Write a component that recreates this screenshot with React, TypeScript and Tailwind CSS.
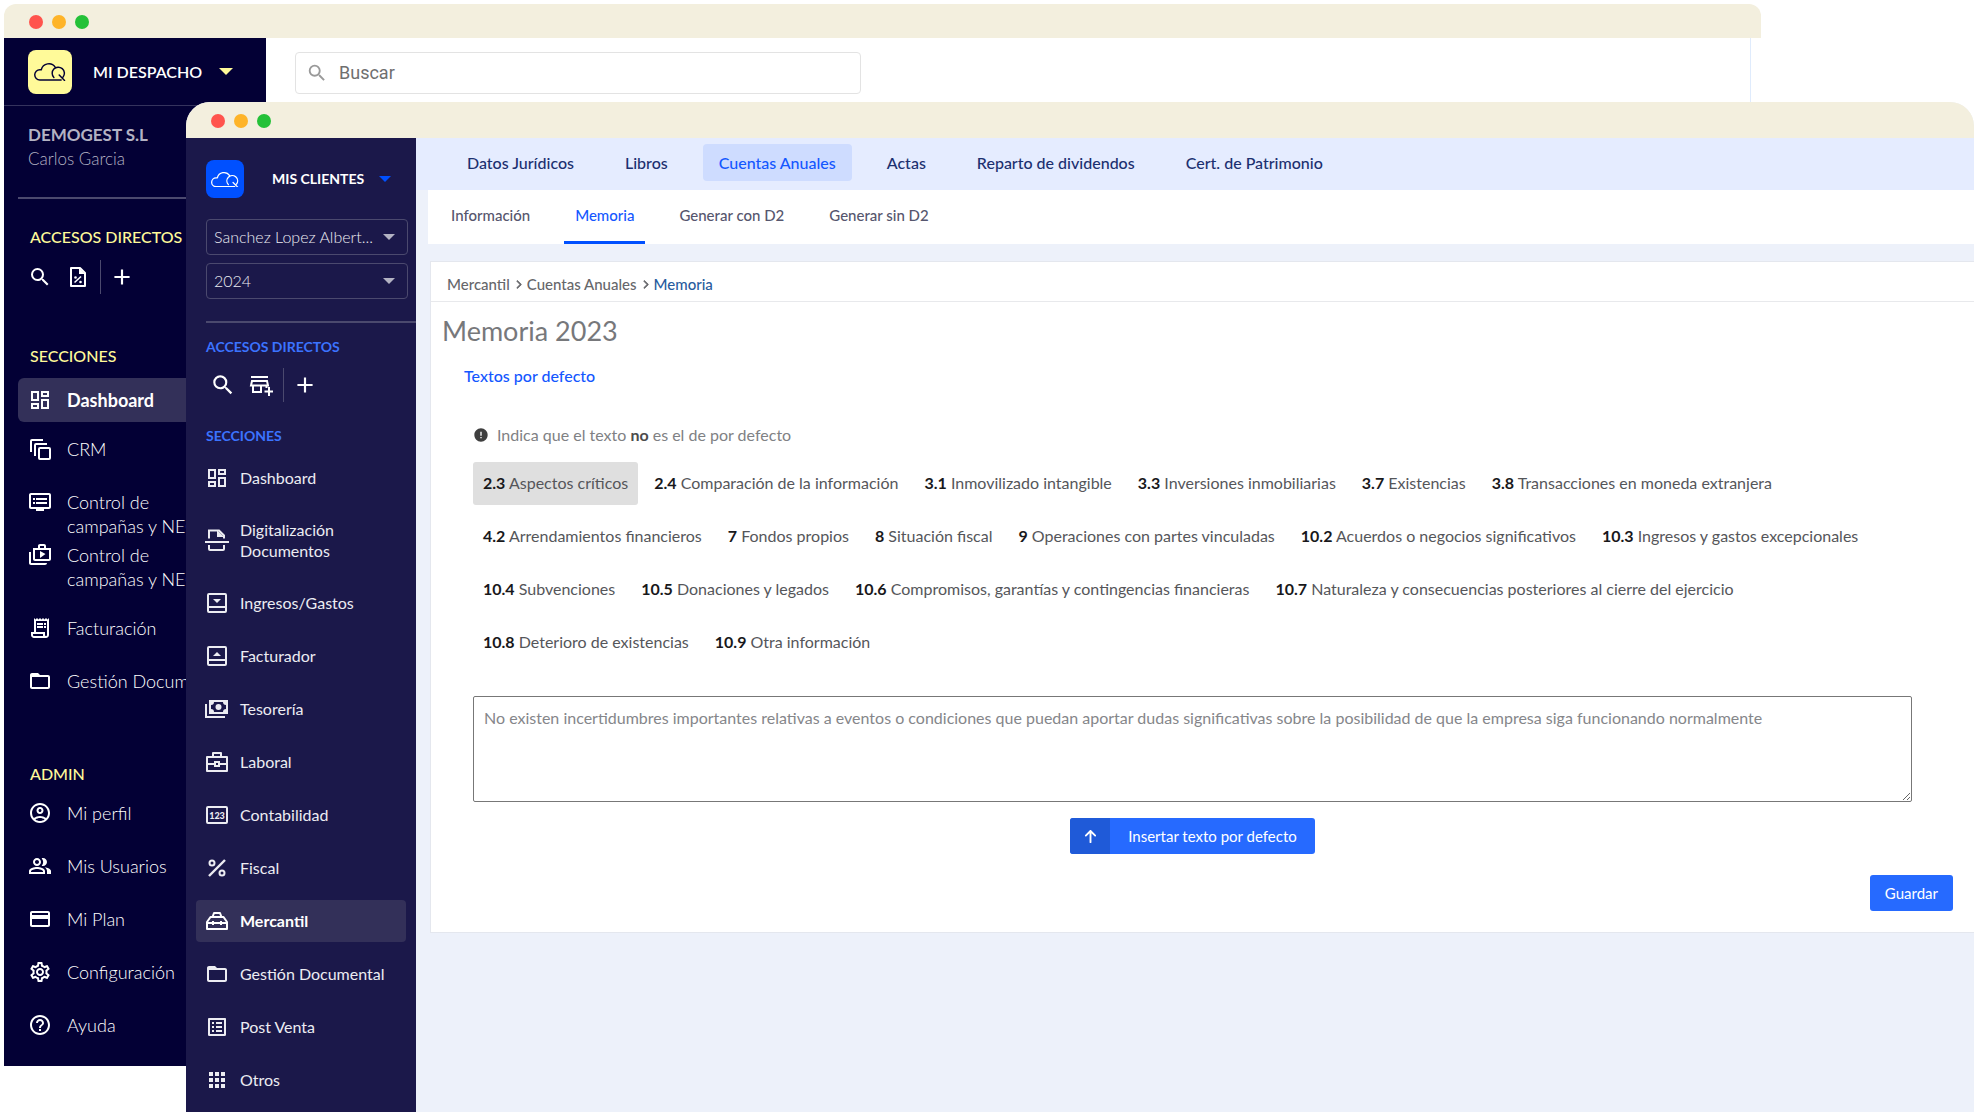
import type { ReactNode } from 'react';
import {
  MdAdd,
  MdApps,
  MdError,
  MdFolderOpen,
  MdHelpOutline,
  MdOutlineAccountCircle,
  MdOutlineCreditCard,
  MdOutlineDashboard,
  MdOutlineDvr,
  MdOutlineListAlt,
  MdOutlinePeopleAlt,
  MdOutlineReceiptLong,
  MdOutlineSettings,
  MdOutlineShopTwo,
  MdSearch,
} from 'react-icons/md';
import { FaArrowUp, FaChevronRight } from 'react-icons/fa6';

interface SvgIconProps {
  children: ReactNode;
}

function SvgIcon({ children }: SvgIconProps) {
  return (
    <svg
      viewBox="0 0 24 24"
      className="size-6"
      fill="none"
      stroke="currentColor"
      strokeWidth="2"
      aria-hidden="true"
    >
      {children}
    </svg>
  );
}

const CloudLogo = ({ className }: { className: string }) => (
  <svg
    viewBox="0 0 33 20"
    className={className}
    fill="none"
    stroke="currentColor"
    strokeWidth="1.5"
    strokeLinecap="round"
    strokeLinejoin="round"
    aria-hidden="true"
  >
    <path d="M28 18.500H6a5.200 5.200 0 0 1 0-10.500h1.500a8 8 0 0 1 14.500-2.500" />
    <path d="M20.500 16a6.300 6.300 0 1 1 9.500-.5M26 13.500l5.500 5.500" />
  </svg>
);

const Caret = ({ className }: { className: string }) => (
  <svg viewBox="0 0 14 7" className={className} fill="currentColor" aria-hidden="true">
    <path d="M0 0h14L7 7z" />
  </svg>
);

const FilePercentIcon = () => (
  <SvgIcon>
    <path d="M5 3h9l5 5v13H5z" strokeLinejoin="round" />
    <path d="M13 3v6h6z" fill="currentColor" stroke="none" />
    <path d="M8.500 17.500l6.500-6" strokeWidth="1.600" />
    <circle cx="9.500" cy="12.500" r="1.300" fill="currentColor" stroke="none" />
    <circle cx="14.500" cy="17" r="1.300" fill="currentColor" stroke="none" />
  </SvgIcon>
);

const StackIcon = () => (
  <SvgIcon>
    <rect x="11" y="11" width="11" height="11" rx="1" />
    <path d="M7 19V8a1 1 0 0 1 1-1h11" />
    <path d="M3 15V4a1 1 0 0 1 1-1h11" />
  </SvgIcon>
);

const StoreAddIcon = () => (
  <SvgIcon>
    <path d="M2 4h17M3 8h15l1 4.500H2zM4 12.500V19h8v-6.500M17.500 12v3" />
    <path d="M20 14v9M15.500 18.500h9" />
  </SvgIcon>
);

const ScanIcon = () => (
  <SvgIcon>
    <path d="M0 14h24M4 10.500V2.500h10l5 5v3M4 17v4a1 1 0 0 0 1 1h13a1 1 0 0 0 1-1v-4" />
    <path d="M12 2v7h7z" fill="currentColor" stroke="none" />
  </SvgIcon>
);

const IncomeIcon = () => (
  <SvgIcon>
    <rect x="3" y="3" width="18" height="18" rx="1" />
    <path d="M3 16h18" />
    <path d="M8 8h8l-4 4z" fill="currentColor" stroke="none" />
  </SvgIcon>
);

const InvoiceIcon = () => (
  <SvgIcon>
    <rect x="3" y="3" width="18" height="18" rx="1" />
    <path d="M3 16h18" />
    <path d="M8 12h8l-4-4z" fill="currentColor" stroke="none" />
  </SvgIcon>
);

const CashIcon = () => (
  <SvgIcon>
    <path d="M1 7v13h19" />
    <path
      d="M4 3h19v14H4zM9 5a3 3 0 0 1-3 3v4a3 3 0 0 1 3 3h9a3 3 0 0 1 3-3V8a3 3 0 0 1-3-3z"
      fill="currentColor"
      fillRule="evenodd"
      stroke="none"
    />
    <circle cx="13.500" cy="10" r="3" fill="currentColor" stroke="none" />
  </SvgIcon>
);

const BriefcaseIcon = () => (
  <SvgIcon>
    <path d="M2 7h20v14H2zM8 7V3h8v4M2 14h8M14 14h8" strokeLinejoin="round" />
    <rect x="10" y="12" width="4" height="4" />
  </SvgIcon>
);

const NumbersIcon = () => (
  <SvgIcon>
    <rect x="2" y="4" width="20" height="16" rx="1" />
    <text
      x="12"
      y="15.500"
      textAnchor="middle"
      fontSize="9"
      fontWeight="900"
      fontFamily="Lato, sans-serif"
      fill="currentColor"
      stroke="none"
    >
      123
    </text>
  </SvgIcon>
);

const PercentIcon = () => (
  <SvgIcon>
    <circle cx="7" cy="7" r="2.500" />
    <circle cx="17" cy="17" r="2.500" />
    <path d="M4 20L20 4" strokeWidth="2.400" />
  </SvgIcon>
);

const ToolboxIcon = () => (
  <SvgIcon>
    <path d="M2 20v-7l3.500-5h13l3.500 5v7zM7.500 8l1.500-4h6l1.500 4M2 14h20" strokeLinejoin="round" />
    <path d="M8 12v4M16 12v4" />
  </SvgIcon>
);

interface NavItem {
  label: string;
  icon: ReactNode;
}

const adminItems: NavItem[] = [
  { label: 'Mi perfil', icon: <MdOutlineAccountCircle className="size-6" /> },
  { label: 'Mis Usuarios', icon: <MdOutlinePeopleAlt className="size-6" /> },
  { label: 'Mi Plan', icon: <MdOutlineCreditCard className="size-6" /> },
  { label: 'Configuración', icon: <MdOutlineSettings className="size-6" /> },
  { label: 'Ayuda', icon: <MdHelpOutline className="size-6" /> },
];

const clientItems: NavItem[] = [
  { label: 'Ingresos/Gastos', icon: <IncomeIcon /> },
  { label: 'Facturador', icon: <InvoiceIcon /> },
  { label: 'Tesorería', icon: <CashIcon /> },
  { label: 'Laboral', icon: <BriefcaseIcon /> },
  { label: 'Contabilidad', icon: <NumbersIcon /> },
  { label: 'Fiscal', icon: <PercentIcon /> },
  { label: 'Mercantil', icon: <ToolboxIcon /> },
  { label: 'Gestión Documental', icon: <MdFolderOpen className="size-6" /> },
  { label: 'Post Venta', icon: <MdOutlineListAlt className="size-6" /> },
  { label: 'Otros', icon: <MdApps className="size-6" /> },
];

const mainTabs = [
  'Datos Jurídicos',
  'Libros',
  'Cuentas Anuales',
  'Actas',
  'Reparto de dividendos',
  'Cert. de Patrimonio',
];

const subTabs = ['Información', 'Memoria', 'Generar con D2', 'Generar sin D2'];

const notes = [
  { id: '2.3', label: 'Aspectos críticos' },
  { id: '2.4', label: 'Comparación de la información' },
  { id: '3.1', label: 'Inmovilizado intangible' },
  { id: '3.3', label: 'Inversiones inmobiliarias' },
  { id: '3.7', label: 'Existencias' },
  { id: '3.8', label: 'Transacciones en moneda extranjera' },
  { id: '4.2', label: 'Arrendamientos financieros' },
  { id: '7', label: 'Fondos propios' },
  { id: '8', label: 'Situación fiscal' },
  { id: '9', label: 'Operaciones con partes vinculadas' },
  { id: '10.2', label: 'Acuerdos o negocios significativos' },
  { id: '10.3', label: 'Ingresos y gastos excepcionales' },
  { id: '10.4', label: 'Subvenciones' },
  { id: '10.5', label: 'Donaciones y legados' },
  { id: '10.6', label: 'Compromisos, garantías y contingencias financieras' },
  { id: '10.7', label: 'Naturaleza y consecuencias posteriores al cierre del ejercicio' },
  { id: '10.8', label: 'Deterioro de existencias' },
  { id: '10.9', label: 'Otra información' },
];

function WindowDots() {
  return (
    <div className="flex gap-[9px]">
      <span className="size-[14px] rounded-full bg-[#ff544d]" />
      <span className="size-[14px] rounded-full bg-[#feb429]" />
      <span className="size-[14px] rounded-full bg-[#24c138]" />
    </div>
  );
}

function OfficeLink({ label, icon }: NavItem) {
  return (
    <a href="#" className="flex h-[53px] items-center gap-[15px] pl-6">
      {icon}
      {label}
    </a>
  );
}

function CampaignLink({ icon }: { icon: ReactNode }) {
  return (
    <a href="#" className="flex items-start gap-[15px] pl-6 leading-6">
      {icon}
      <span>
        Control de
        <br />
        campañas y NEOS
      </span>
    </a>
  );
}

function OfficeSidebar() {
  return (
    <aside className="w-[262px] shrink-0 overflow-hidden bg-[#030035] text-lg font-light whitespace-nowrap text-white">
      <div className="flex h-[68px] items-center border-b border-[#35335d] pl-6">
        <span className="flex size-11 items-center justify-center rounded-lg bg-[#fffa99] text-[#030035]">
          <CloudLogo className="w-8" />
        </span>
        <button className="ml-[21px] flex items-center gap-[17px] text-base font-semibold">
          MI DESPACHO
          <Caret className="w-[14px] text-[#fffa99]" />
        </button>
      </div>
      <div className="mt-[17px] pl-6 leading-6 text-[#b3b2c3]">
        <p className="text-[17px] font-bold">DEMOGEST S.L</p>
        <p className="text-[17px]">Carlos Garcia</p>
      </div>
      <div className="mt-[26px] ml-[14px] border-t-2 border-[#4b496e]" />
      <h2 className="mt-[26px] pl-[26px] text-base font-medium text-[#fffa99]">ACCESOS DIRECTOS</h2>
      <div className="mt-[11px] flex h-[34px] items-center pl-6">
        <button aria-label="Buscar"><MdSearch className="size-6" /></button>
        <button aria-label="Impuestos" className="ml-[14px]"><FilePercentIcon /></button>
        <span className="ml-[10px] h-full border-l border-[#4b496e]" />
        <button aria-label="Añadir" className="ml-2"><MdAdd className="size-[26px]" /></button>
      </div>
      <h2 className="mt-[50px] pl-[26px] text-base font-medium text-[#fffa99]">SECCIONES</h2>
      <nav className="mt-[10px]">
        <a
          href="#"
          className="ml-[14px] flex h-11 items-center gap-[15px] rounded-l-md bg-[#333059] pl-[10px] font-bold"
        >
          <MdOutlineDashboard className="size-6" />
          Dashboard
        </a>
        <OfficeLink label="CRM" icon={<StackIcon />} />
        <div className="mt-[15px] mb-[10px] flex flex-col gap-[5px]">
          <CampaignLink icon={<MdOutlineDvr className="size-6" />} />
          <CampaignLink icon={<MdOutlineShopTwo className="size-6" />} />
        </div>
        <OfficeLink label="Facturación" icon={<MdOutlineReceiptLong className="size-6" />} />
        <OfficeLink label="Gestión Documental" icon={<MdFolderOpen className="size-6" />} />
      </nav>
      <h2 className="mt-[55px] pl-[26px] text-base font-medium text-[#fffa99]">ADMIN</h2>
      <nav className="pb-[15px]">
        {adminItems.map((item) => (
          <OfficeLink key={item.label} {...item} />
        ))}
      </nav>
    </aside>
  );
}

function SidebarSelect({ label, value }: { label: string; value: string }) {
  return (
    <div className="relative">
      <select
        aria-label={label}
        className="h-9 w-full appearance-none rounded border border-[#4b496e] bg-transparent px-[7px] text-base font-light text-[#ececf2]"
      >
        <option>{value}</option>
      </select>
      <Caret className="pointer-events-none absolute top-[15px] right-[13px] w-3 text-[#b3b2c3]" />
    </div>
  );
}

function ClientLink({ label, icon }: NavItem) {
  const active = label === 'Mercantil';

  return (
    <a
      href="#"
      className={`mx-[10px] mb-[11px] flex h-[42px] items-center gap-[11px] rounded pl-[9px] ${
        active ? 'bg-[#333059] font-bold text-white' : ''
      }`}
    >
      {icon}
      {label}
    </a>
  );
}

function ClientSidebar() {
  return (
    <aside className="w-[230px] shrink-0 overflow-hidden bg-[#1b184a] text-base text-[#ececf2]">
      <div className="mt-[22px] flex items-center pl-5">
        <span className="flex size-[38px] items-center justify-center rounded-lg bg-[#0050ff] text-white">
          <CloudLogo className="w-7" />
        </span>
        <button className="ml-7 flex items-center gap-[15px] text-sm font-bold text-white">
          MIS CLIENTES
          <Caret className="w-3 text-[#0050ff]" />
        </button>
      </div>
      <div className="mt-[21px] mr-2 ml-5 flex flex-col gap-2">
        <SidebarSelect label="Cliente" value="Sanchez Lopez Albert..." />
        <SidebarSelect label="Ejercicio" value="2024" />
      </div>
      <div className="mt-[22px] ml-5 border-t-2 border-[#4b496e]" />
      <h2 className="mt-3 pl-5 text-sm leading-6 font-bold text-[#3b73ff]">ACCESOS DIRECTOS</h2>
      <div className="mt-[9px] flex h-[34px] items-center pl-6 text-white">
        <button aria-label="Buscar"><MdSearch className="size-[26px]" /></button>
        <button aria-label="Nueva tienda" className="ml-[13px]"><StoreAddIcon /></button>
        <span className="ml-[10px] h-full border-l border-[#4b496e]" />
        <button aria-label="Añadir" className="ml-2"><MdAdd className="size-[26px]" /></button>
      </div>
      <h2 className="mt-[22px] pl-5 text-sm leading-6 font-bold text-[#3b73ff]">SECCIONES</h2>
      <nav className="mt-[9px]">
        <ClientLink label="Dashboard" icon={<MdOutlineDashboard className="size-6" />} />
        <a href="#" className="mt-5 mb-[21px] flex items-center gap-[11px] pl-[19px] leading-[21px]">
          <ScanIcon />
          <span>
            Digitalización
            <br />
            Documentos
          </span>
        </a>
        {clientItems.map((item) => (
          <ClientLink key={item.label} {...item} />
        ))}
      </nav>
    </aside>
  );
}

function MemoriaCard() {
  return (
    <section className="mt-[17px] ml-[14px] border-y border-l border-[#e4e7ee] bg-white">
      <nav className="flex h-10 items-center gap-1 border-b border-[#e8e9ec] pt-[6px] pl-4 text-[15px] font-medium text-[#66676b]">
        <a href="#">Mercantil</a>
        <FaChevronRight className="size-[9px] stroke-current stroke-[40px]" />
        <a href="#">Cuentas Anuales</a>
        <FaChevronRight className="size-[9px] stroke-current stroke-[40px]" />
        <a href="#" className="text-[#285c9e]">Memoria</a>
      </nav>
      <h1 className="mt-[11px] pl-[11px] text-[27px] leading-9 text-[#77787b]">Memoria 2023</h1>
      <h2 className="mt-[15px] pl-[33px] text-base leading-6 font-medium text-[#1457ff]">
        Textos por defecto
      </h2>

      <div className="mt-[35px] mr-[62px] ml-[42px]">
        <p className="flex items-center gap-2 leading-6 text-[#808184]">
          <MdError className="size-4 text-[#3f3f3f]" />
          <span>
            Indica que el texto <b className="text-[#4c4c4c]">no</b> es el de por defecto
          </span>
        </p>
        <div className="mt-[15px] flex flex-wrap gap-x-[6px] gap-y-[10px]">
          {notes.map(({ id, label }) => (
            <button
              key={id}
              className={`h-[43px] rounded-[3px] px-[10px] pb-[2px] text-base text-[#55565a] ${
                id === '2.3' ? 'bg-[#dfdfdf]' : ''
              }`}
            >
              <b className="text-[#18181b]">{id}</b> {label}
            </button>
          ))}
        </div>
        <textarea
          aria-label="Texto de la memoria"
          className="mt-8 block h-[106px] w-full rounded-[2px] border border-[#777] px-[10px] py-[9px] text-base text-[#85868a]"
          defaultValue="No existen incertidumbres importantes relativas a eventos o condiciones que puedan aportar dudas significativas sobre la posibilidad de que la empresa siga funcionando normalmente"
        />
        <button className="mx-auto mt-4 flex h-9 items-center overflow-hidden rounded-[3px] bg-[#266aff] text-[15px] text-white">
          <span className="flex h-full w-10 items-center justify-center bg-[#1f5ad8]">
            <FaArrowUp className="size-[15px]" />
          </span>
          <span className="px-[18px]">Insertar texto por defecto</span>
        </button>
      </div>
      <div className="mt-[21px] mr-[21px] mb-[21px] flex justify-end">
        <button className="h-9 rounded-[3px] bg-[#266aff] px-[15px] text-[15px] text-white">
          Guardar
        </button>
      </div>
    </section>
  );
}

export default function App() {
  return (
    <div className="relative min-h-screen overflow-hidden bg-white font-['Lato',sans-serif]">
      <div className="absolute top-1 right-[213px] left-1">
        <div className="flex h-[34px] items-center rounded-t-xl bg-[#f3efde] pt-[2px] pl-[25px]">
          <WindowDots />
        </div>
        <div className="mr-[10px] flex border-r border-[#dfebfc] bg-white">
          <OfficeSidebar />
          <label className="mt-[14px] ml-[29px] flex h-[42px] w-[566px] items-center gap-[11px] rounded border border-[#e3e3e3] pl-[10px] text-[#999]">
            <MdSearch className="size-[22px]" />
            <input
              type="text"
              placeholder="Buscar"
              aria-label="Buscar"
              className="flex-1 font-['Roboto',sans-serif] text-lg outline-none placeholder:text-[#6f6f6f]"
            />
          </label>
        </div>
      </div>

      <div className="absolute top-[102px] right-0 bottom-0 left-[186px] flex flex-col overflow-hidden rounded-t-3xl bg-[#edf1fa]">
        <div className="flex h-9 shrink-0 items-center bg-[#f3efde] pt-[2px] pl-[25px]">
          <WindowDots />
        </div>
        <div className="flex min-h-0 flex-1">
          <ClientSidebar />
          <main className="min-w-0 flex-1">
            <nav className="flex h-[52px] gap-[19px] bg-[#e5ecff] pt-[6px] pl-[35px] text-base font-medium text-[#1c3070]">
              {mainTabs.map((tab) => (
                <a
                  key={tab}
                  href="#"
                  className={`flex h-[37px] items-center rounded px-4 ${
                    tab === 'Cuentas Anuales' ? 'bg-[#cedcff] text-[#1457ff]' : ''
                  }`}
                >
                  {tab}
                </a>
              ))}
            </nav>
            <nav className="ml-3 flex h-[54px] gap-[23px] bg-white pl-3 text-[15px] font-medium text-[#56566e]">
              {subTabs.map((tab) => (
                <a
                  key={tab}
                  href="#"
                  className={`flex items-center border-b-3 px-[11px] ${
                    tab === 'Memoria' ? 'border-[#0050ff] text-[#1457ff]' : 'border-transparent'
                  }`}
                >
                  {tab}
                </a>
              ))}
            </nav>
            <MemoriaCard />
          </main>
        </div>
      </div>
    </div>
  );
}
